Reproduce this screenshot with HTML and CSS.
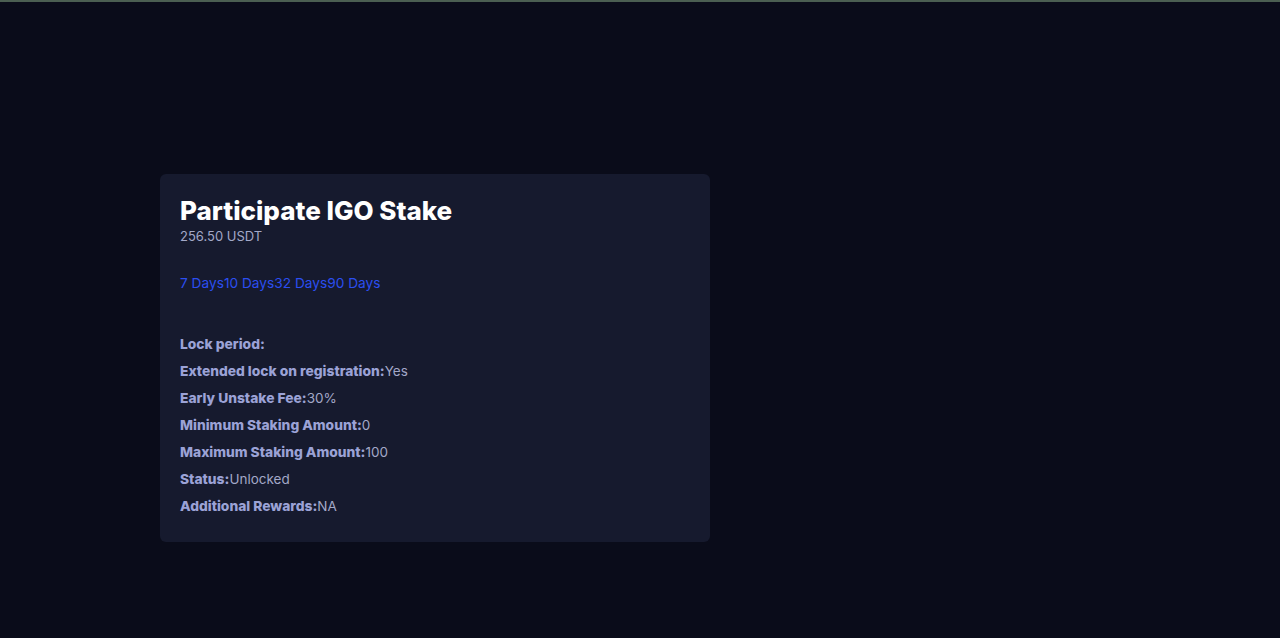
FILE: index.html
```html
<!DOCTYPE html>
<html>
<head>
<meta charset="utf-8">
<link rel="stylesheet" href="styles.css">
</head>
<body>
<div class="topline"></div>
<main class="page">
  <section class="card">
    <h1 class="title">Participate IGO Stake</h1>
    <div class="balance">256.50 USDT</div>
    <div class="tabs"><span>7 Days</span><span>10 Days</span><span>32 Days</span><span>90 Days</span></div>
    <ul class="info">
      <li><b>Lock period:</b></li>
      <li><b>Extended lock on registration:</b>Yes</li>
      <li><b>Early Unstake Fee:</b>30%</li>
      <li><b>Minimum Staking Amount:</b>0</li>
      <li><b>Maximum Staking Amount:</b>100</li>
      <li><b>Status:</b>Unlocked</li>
      <li><b>Additional Rewards:</b>NA</li>
    </ul>
  </section>
</main>
</body>
</html>
```

FILE: styles.css
```css
html, body {
  margin: 0;
  padding: 0;
  background: #0a0c1a;
  height: 100%;
  font-family: "Inter", "Lato", "Liberation Sans", sans-serif;
}
.topline {
  height: 2px;
  background: #4b5f52;
}
.page {
  padding: 172px 0 0 160px;
}
.card {
  width: 510px;
  background: #161a2e;
  border-radius: 6px;
  padding: 20px 20px 22px;
}
.title {
  margin: 0;
  font-size: 26px;
  font-weight: 800;
  color: #ffffff;
  line-height: 33px;
  letter-spacing: 0;
}
.balance {
  margin-top: 1px;
  font-size: 13px;
  color: #a3a8c8;
  line-height: 16px;
}
.tabs {
  margin-top: 31px;
  font-size: 13.7px;
  line-height: 16px;
  color: #2b4ef0;
}
.info {
  list-style: none;
  margin: 40px 0 0;
  padding: 0;
  font-size: 13.5px;
  color: #a3a8c8;
}
.info li {
  line-height: 27px;
}
.info b {
  color: #9ba2d6;
  font-weight: 800;
  font-size: 13.8px;
}
```
